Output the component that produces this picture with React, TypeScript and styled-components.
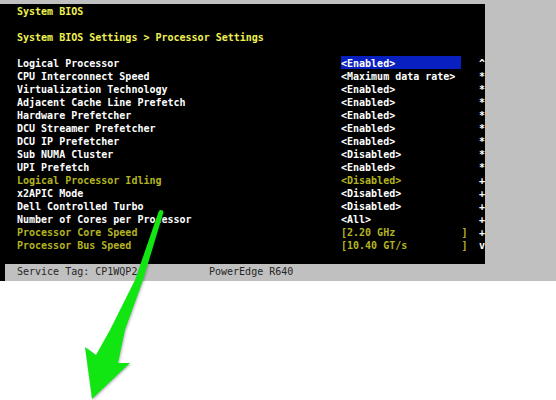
import React from "react";
import styled, { createGlobalStyle } from "styled-components";

const GlobalStyle = createGlobalStyle`
  html, body { margin: 0; padding: 0; background: #ffffff; }
  body { font-family: "DejaVu Sans Mono", "Liberation Mono", monospace; }
`;

const Page = styled.div`
  position: relative;
  width: 556px;
  height: 400px;
  overflow: hidden;
  background: #ffffff;
`;

const Frame = styled.div`
  width: 556px;
  padding-top: 4px;
  background: #c0c0c0;
  display: flex;
  flex-direction: column;
`;

const Console = styled.div`
  width: 485px;
  height: 260px;
  box-sizing: border-box;
  background: #000000;
  padding-left: 17px;
  display: flex;
  flex-direction: column;
  font-family: "DejaVu Sans Mono", "Liberation Mono", monospace;
  font-size: 10px;
  font-weight: bold;
  white-space: pre;
`;

const Line = styled.div<{ $tone?: "title" | "dim" | "normal" }>`
  height: 11px;
  padding-top: 2px;
  line-height: 11px;
  color: ${(p) =>
    p.$tone === "title" ? "#f0f052" : p.$tone === "dim" ? "#b3b320" : "#ffffff"};
`;

const Row = styled.div`
  display: grid;
  grid-template-columns: 324px 138px 6px;
  height: 13px;
`;

const Cell = styled.div<{ $dim?: boolean }>`
  height: 11px;
  padding-top: 2px;
  line-height: 11px;
  color: ${(p) => (p.$dim ? "#b3b320" : "#ffffff")};
`;

const Value = styled.div<{ $dim?: boolean; $selected?: boolean }>`
  width: 120px;
  height: 11px;
  padding-top: 2px;
  line-height: 11px;
  color: ${(p) => (p.$dim ? "#b3b320" : "#ffffff")};
  background: ${(p) => (p.$selected ? "#0820c0" : "transparent")};
`;

const Indicator = styled.div`
  height: 11px;
  padding-top: 2px;
  line-height: 11px;
  color: #ffffff;
`;

const StatusBar = styled.div`
  height: 15px;
  padding-top: 2px;
  border-left: 5px solid #000000;
  padding-left: 12px;
  display: flex;
  font-family: "DejaVu Sans Mono", "Liberation Mono", monospace;
  font-size: 10px;
  line-height: 11px;
  color: #262626;
  white-space: pre;
`;

const StatusItem = styled.span<{ $width?: number }>`
  width: ${(p) => (p.$width ? `${p.$width}px` : "auto")};
`;

const Overlay = styled.svg`
  position: absolute;
  left: 0;
  top: 0;
  width: 556px;
  height: 400px;
  pointer-events: none;
  filter: drop-shadow(1px 1px 1px rgba(60, 40, 80, 0.35));
`;

type Item = {
  label: string;
  value: string;
  ind: string;
  dim?: boolean;
  selected?: boolean;
};

const items: Item[] = [
  { label: "Logical Processor", value: "<Enabled>", ind: "^", selected: true },
  { label: "CPU Interconnect Speed", value: "<Maximum data rate>", ind: "*" },
  { label: "Virtualization Technology", value: "<Enabled>", ind: "*" },
  { label: "Adjacent Cache Line Prefetch", value: "<Enabled>", ind: "*" },
  { label: "Hardware Prefetcher", value: "<Enabled>", ind: "*" },
  { label: "DCU Streamer Prefetcher", value: "<Enabled>", ind: "*" },
  { label: "DCU IP Prefetcher", value: "<Enabled>", ind: "*" },
  { label: "Sub NUMA Cluster", value: "<Disabled>", ind: "*" },
  { label: "UPI Prefetch", value: "<Enabled>", ind: "*" },
  { label: "Logical Processor Idling", value: "<Disabled>", ind: "+", dim: true },
  { label: "x2APIC Mode", value: "<Disabled>", ind: "+" },
  { label: "Dell Controlled Turbo", value: "<Disabled>", ind: "+" },
  { label: "Number of Cores per Processor", value: "<All>", ind: "+" },
  { label: "Processor Core Speed", value: "[2.20 GHz           ]", ind: "+", dim: true },
  { label: "Processor Bus Speed", value: "[10.40 GT/s         ]", ind: "v", dim: true },
];

export default function App() {
  return (
    <>
      <GlobalStyle />
      <Page>
        <Frame>
          <Console>
            <Line $tone="title">System BIOS</Line>
            <Line> </Line>
            <Line $tone="title">System BIOS Settings &gt; Processor Settings</Line>
            <Line> </Line>
            {items.map((it) => (
              <Row key={it.label}>
                <Cell $dim={it.dim}>{it.label}</Cell>
                <Value $dim={it.dim} $selected={it.selected}>
                  {it.value}
                </Value>
                <Indicator>{it.ind}</Indicator>
              </Row>
            ))}
          </Console>
          <StatusBar>
            <StatusItem $width={192}>Service Tag: CP1WQP2</StatusItem>
            <StatusItem>PowerEdge R640</StatusItem>
          </StatusBar>
        </Frame>
        <Overlay viewBox="0 0 556 400">
          <path
            d="M 163.5 212 L 143 280 L 125 330 L 118 363 L 130 363 L 92 399 L 85 347 L 96 355 L 110 330 L 135 280 L 158.5 212 A 2.6 2.6 0 0 1 163.5 212 Z"
            fill="#12e612"
          />
        </Overlay>
      </Page>
    </>
  );
}
